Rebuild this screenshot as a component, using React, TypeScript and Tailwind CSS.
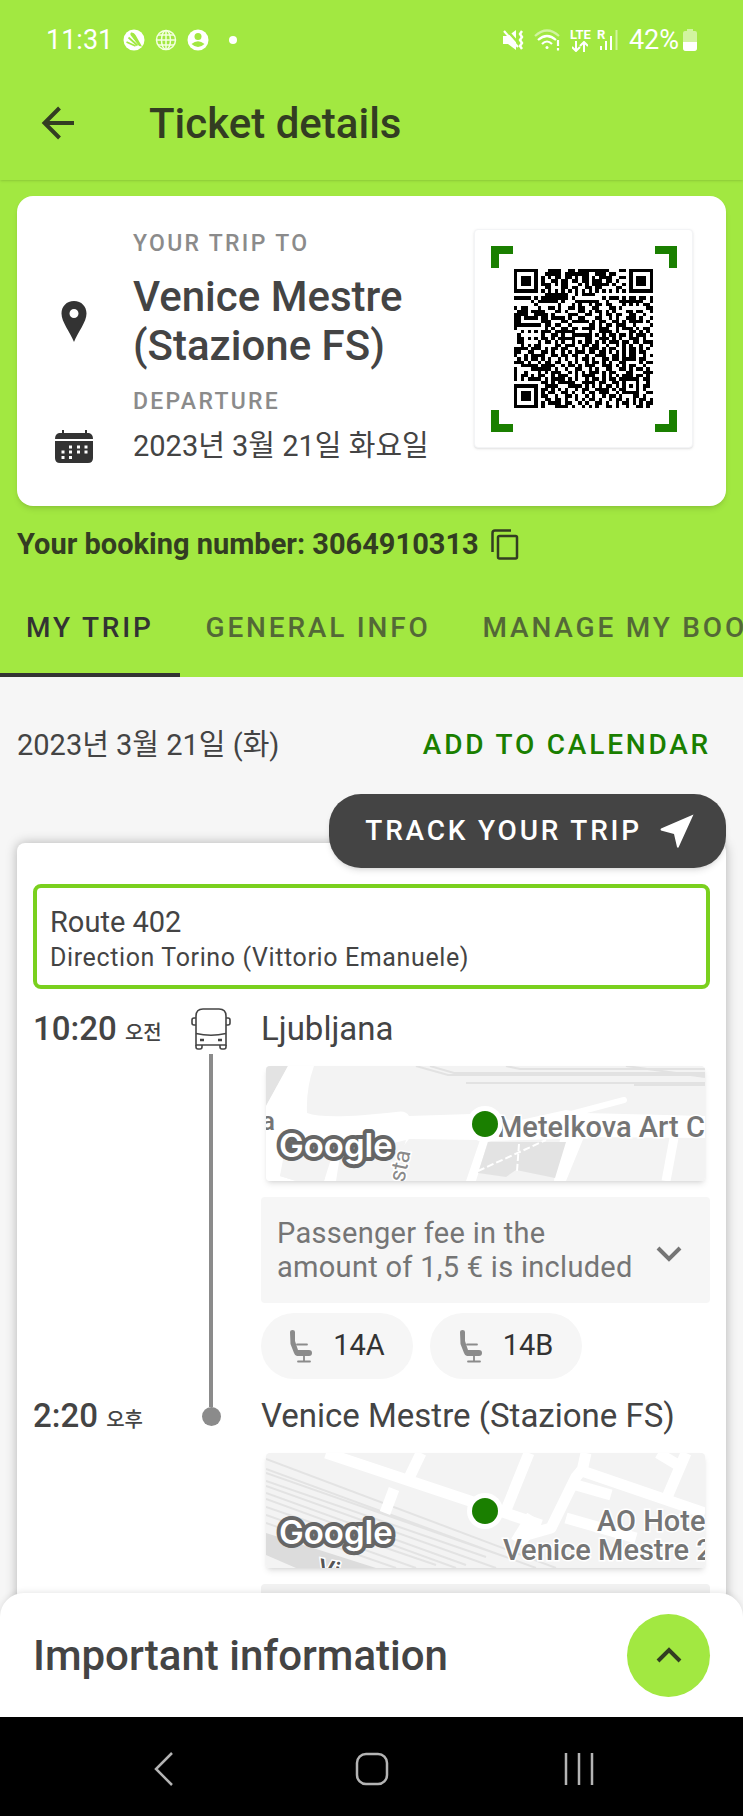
import React from "react";

const FONT = "font-[Roboto,'Noto_Sans_CJK_KR',sans-serif]";

// 예매 QR 코드 (41 x 41)
const QR_ROWS = [
  "#######...####..##.#########...##.#######",
  "#.....#..#####.#######..###.##....#.....#",
  "#.###.#.#.#.##.##.#.##.#.####..##.#.###.#",
  "#.###.#.#..##.##.##.##.###.##.#...#.###.#",
  "#.###.#.###.#.##...#.#.#####.#..#.#.###.#",
  "#.....#..##...##.##..##.##....##..#.....#",
  "#######.#.#.#.#.#.#.#.#.#.#.#.#.#.#######",
  ".........#######..#.####.................",
  "#####.#.########.#........#.###.#.##.##.#",
  ".....#.######.#...#######..#...#######..#",
  "......#......#...#.#..#.##.##...#.#.#.##.",
  "#.##...#..##.#..##.##..##...##.#.......##",
  ".###.####...##.#...##.#.##.#.#...##.##..#",
  "####..####.#....###..##..#.##.##..##..#..",
  "##.####.##.####.#..##...##..#.#..###.#..#",
  "##......###...##.#####.#.##..##.#.####.#.",
  "########.##.##..#.....##.#.##.###..#....#",
  "#........#.#..##.##.####.###..#.###.#.##.",
  "..#.#.#.###.######....#..####.#...##.#.#.",
  ".#......#..##.#..######.#.#.##.##.#.###.#",
  ".##.#.#.##.#.#####...##..###.#.#..###.#..",
  ".##....#.##.#.#..#.#.##.#.#.###.##.##.###",
  "..#.#.##....##.###..##.##..#..#.#.#..#..#",
  "####.###.#.##.##..#.#.###.#.##..#.##.#.#.",
  "##..##..##.#..#.#.###.##.##.#.#.#.##.##..",
  "#..#.####..##.##.##..#..###..##.#.##..#.#",
  ".#.#.##.#.#..#.#..#.##.#..##.##.####.##..",
  "###.#..#.##.##..#.#..#.##.#.#..##....#.##",
  "..#####.####..#.##.#.###..###.#.#.##..#..",
  "#....######.#..#..##..#.#..##..##.#.##.#.",
  "#..#...#.#.###..#.#.#.###.#.##...##...###",
  "#.##.#.##..#.###..#.####..#.#.#.###.##.#.",
  "#.#.####.#.####.#.#..#.##.#.##.######.##.",
  "........##.#.#####..####.##..##.#...#..#.",
  "#######..####...####.#.#.#.##.#.#.#.#.##.",
  "#.....#.##.#.#.#..#.##..####.#.##...#.#..",
  "#.###.#.#.##..##.#..#.##.###..#.#####..##",
  "#.###.#.##..#..##.#..#.#..#.##.#...##.#..",
  "#.###.#..##.##.#..#.#.##.#..#.##.#.#.##.#",
  "#.....#.#.####.##..#.#..##.#..#.##.#.#.##",
  "#######.#...####.#..#.#.#..##.#..#..##.#.",
];

const QrCode: React.FC = () => (
  <svg
    viewBox="0 0 41 41"
    className="w-[139px] h-[139px]"
    shapeRendering="crispEdges"
    role="img"
    aria-label="QR"
  >
    {QR_ROWS.map((row, y) =>
      row
        .split("")
        .map((cell, x) =>
          cell === "#" ? (
            <rect key={`${x}-${y}`} x={x} y={y} width="1" height="1" />
          ) : null
        )
    )}
  </svg>
);

const GoogleLogo: React.FC = () => (
  <text
    x="13"
    y="91"
    fontFamily="Inter, sans-serif"
    fontWeight="600"
    fontSize="33"
    fill="#fff"
    stroke="#666"
    strokeWidth="8"
    strokeLinejoin="round"
    paintOrder="stroke"
  >
    Google
  </text>
);

const MapMarker: React.FC = () => (
  <g>
    <circle cx="219" cy="58" r="18" fill="#fff" />
    <circle cx="219" cy="58" r="13" fill="#1a7f00" />
  </g>
);

const mapLabel = {
  fontFamily: "Roboto, sans-serif",
  fontWeight: 500,
  fontSize: 29,
  fill: "#757575",
  stroke: "#fff",
  strokeWidth: 3,
  paintOrder: "stroke",
};

const LjubljanaMap: React.FC = () => (
  <svg
    viewBox="0 0 439 115"
    preserveAspectRatio="xMidYMid slice"
    className="block w-full h-[115px] rounded bg-[#f3f3f3]"
  >
    <path d="M0 0H22L0 40Z" fill="#e3e3e3" />
    <path
      d="M22 0H48Q40 22 41 47Q60 54 130 46Q140 44 143 50L205 48L250 55L300 44L318 47L439 50V72L318 71L300 115H288L294 73L222 75L210 115H200L214 74L143 73L110 115H78L70 115H58L66 90L20 88L14 110L30 115H0V40Z"
      fill="#fff"
    />
    <path d="M18 88L66 82L58 115H30L14 110Z" fill="#f3f3f3" />
    <path d="M74 90L140 74L128 115H70Z" fill="#f3f3f3" />
    <path d="M290 52L358 34" stroke="#fff" strokeWidth="6" strokeLinecap="round" />
    <path d="M222 76H300L289 112L250 104L240 111L212 107Z" fill="#e3e3e3" />
    <path
      d="M212 105L280 74M253 78L251 105"
      stroke="#fff"
      strokeWidth="2"
      strokeDasharray="7 3"
      fill="none"
    />
    <path d="M408 72L400 115" stroke="#fff" strokeWidth="9" />
    <path
      d="M150 0L182 9H439M164 0L188 7H439M240 0L254 3H439M200 17H439M368 19H439M360 0L439 11"
      stroke="#e2e2e2"
      strokeWidth="2"
      fill="none"
    />
    <text x="-5" y="64" {...mapLabel} fontSize="26">
      a
    </text>
    <text
      x="0"
      y="0"
      {...mapLabel}
      fontWeight="400"
      fontSize="23"
      fill="#8a8a8a"
      transform="translate(138 117) rotate(-78)"
    >
      sta
    </text>
    <text x="231" y="71" {...mapLabel}>
      Metelkova Art Center
    </text>
    <GoogleLogo />
    <MapMarker />
  </svg>
);

const VeniceMap: React.FC = () => (
  <svg
    viewBox="0 0 439 115"
    preserveAspectRatio="xMidYMid slice"
    className="block w-full h-[115px] rounded bg-[#f3f3f3]"
  >
    <path d="M0 80L110 115H30L0 102Z" fill="#dcdcdc" />
    <path
      d="M0 6L290 115M0 16L270 115M0 20L240 104M0 28L220 104M0 33L230 115M0 40L200 112M0 46L190 115M0 54L170 112M0 62L150 115M0 70L130 115"
      stroke="#e3e3e3"
      strokeWidth="2"
      fill="none"
    />
    <path
      d="M60 0L210 50L275 72M155 0L143 25M128 36L119 60M263 0L238 62M250 85L285 75L310 24L320 12M320 0L316 18L439 60M420 0L402 42M392 0L412 12M300 65L370 85M310 32L345 42"
      stroke="#fff"
      strokeWidth="11"
      strokeLinejoin="round"
      fill="none"
    />
    <path d="M252 90L268 64" stroke="#fff" strokeWidth="16" />
    <text
      x="0"
      y="0"
      {...mapLabel}
      fontSize="24"
      fill="#555"
      transform="translate(51 122) rotate(12)"
    >
      Vi
    </text>
    <text x="331" y="78" {...mapLabel}>
      AO Hotel
    </text>
    <text x="237" y="107" {...mapLabel}>
      Venice Mestre 2
    </text>
    <GoogleLogo />
    <MapMarker />
  </svg>
);

const BusIcon: React.FC = () => (
  <svg
    viewBox="0 0 40 42"
    className="w-10 h-[42px]"
    fill="none"
    stroke="#444"
    strokeWidth="1.6"
  >
    <path d="M5 37V8Q5 1 12 1H28Q35 1 35 8V37Z" />
    <path d="M5 25.500Q20 29 35 25.500" />
    <path d="M5 10H3Q1 10 1 12V15Q1 17 3 17H5M35 10H37Q39 10 39 12V15Q39 17 37 17H35" />
    <path d="M5 37V39Q5 41 7 41H9Q11 41 11 39V37M29 37V39Q29 41 31 41H33Q35 41 35 39V37" />
    <path d="M9 32H13M27 32H31" strokeWidth="2.400" />
  </svg>
);

const SeatIcon: React.FC = () => (
  <svg viewBox="0 0 24 34" className="w-6 h-[34px]" fill="#8b8b8b">
    <path d="M1 3Q1 1 3.500 1T6 3V12L9 21H20Q23 21 23 24T20 27H8Q6 27 5 24L1.500 15Z" />
    <path
      d="M8 15.500H18M15 26V32M9 32.500H21"
      stroke="#8b8b8b"
      strokeWidth="1.800"
      strokeLinecap="round"
    />
  </svg>
);

const StatusBar: React.FC = () => (
  <div className="flex items-center justify-between pl-[46px] pr-[46px] pt-5 h-[60px] text-white text-[27px]">
    <div className="flex items-center">
      <span>11:31</span>
      <svg viewBox="0 0 22 22" className="ml-2.5 w-[22px] h-[22px]">
        <circle cx="11" cy="11" r="10.500" fill="#fff" />
        <path
          d="M8 3.500Q11 3 12.500 6L19 17.500L16 17L7.500 6Q7 4.500 8 3.500Z"
          fill="#a2e841"
        />
        <path
          d="M5.500 8.500L14.500 16.500M3.500 13L12.500 17"
          stroke="#a2e841"
          strokeWidth="1.800"
          fill="none"
        />
      </svg>
      <svg
        viewBox="0 0 22 22"
        className="ml-2.5 w-[22px] h-[22px]"
        fill="none"
        stroke="#f4ffe0"
        strokeWidth="1.500"
      >
        <circle cx="11" cy="11" r="9.500" />
        <ellipse cx="11" cy="11" rx="4.500" ry="9.500" />
        <path d="M11 1V21M1.500 11H20.500M3 6H19M3 16H19" />
      </svg>
      <svg viewBox="0 0 22 22" className="ml-2.5 w-[22px] h-[22px]">
        <circle cx="11" cy="11" r="10.500" fill="#fff" />
        <circle cx="11" cy="7.500" r="3.500" fill="#a2e841" />
        <path d="M4.500 15Q11 9.500 17.500 15Q11 21 4.500 15Z" fill="#a2e841" />
      </svg>
      <span className="ml-5 w-2 h-2 rounded-full bg-white" />
    </div>
    <div className="flex items-center">
      <svg viewBox="0 0 22 22" className="w-[22px] h-[22px]" fill="#fff">
        <path d="M1 7H6L14 1V21L6 15H1Z" />
        <path d="M3 -1L19 17" stroke="#a2e841" strokeWidth="2.500" />
        <path d="M2 2L16 18" stroke="#fff" strokeWidth="2.200" />
        <path
          d="M20 2L18 5L20 8L18 11L20 14L18 17L20 20"
          stroke="#fff"
          strokeWidth="2.400"
          fill="none"
        />
      </svg>
      <svg
        viewBox="0 0 26 22"
        className="ml-2.5 w-[26px] h-[22px]"
        fill="none"
        stroke="#fff"
        strokeWidth="2.200"
      >
        <path d="M1 7Q13 -4 25 7" opacity=".5" />
        <path d="M4 11Q13 3 22 11M8 15Q13 10 18 15" />
        <circle cx="13" cy="18.500" r="1.500" fill="#fff" stroke="none" />
        <path d="M24 11V17M24 19V21.500" />
      </svg>
      <div className="ml-2.5 flex flex-col items-center">
        <span className="text-[13px] leading-3 font-bold">LTE</span>
        <svg
          viewBox="0 0 16 11"
          className="w-4 h-[11px]"
          fill="none"
          stroke="#fff"
          strokeWidth="2"
        >
          <path d="M4 0V9M0 6L4 10L8 6M12 11V1M8 5L12 1L16 5" />
        </svg>
      </div>
      <svg viewBox="0 0 22 22" className="ml-1.5 w-[22px] h-[22px]" fill="#fff">
        <text x="0" y="10" fontSize="13" fontWeight="700" fontFamily="Roboto, sans-serif">
          R
        </text>
        <path d="M3 17H5V21H3ZM8 12H10V21H8ZM13 7H15V21H13Z" />
        <path d="M18.500 1H20.500V21H18.500Z" opacity=".5" />
      </svg>
      <span className="ml-2.5">42%</span>
      <svg viewBox="0 0 14 22" className="ml-1 w-3.5 h-[22px]" fill="#fff">
        <path
          d="M4 0H10V2H12Q14 2 14 4V19Q14 22 11 22H3Q0 22 0 19V4Q0 2 2 2H4Z"
          opacity=".5"
        />
        <path d="M0 13H14V19Q14 22 11 22H3Q0 22 0 19Z" />
      </svg>
    </div>
  </div>
);

const SeatChip: React.FC<{ seat: string }> = ({ seat }) => (
  <span className="flex items-center justify-center gap-5 w-[152px] h-[66px] rounded-full bg-[#f6f6f6] text-[29px] text-[#333]">
    <SeatIcon />
    {seat}
  </span>
);

const TripHeader: React.FC = () => (
  <section className="px-[17px] pt-4">
    <div className="flex justify-between h-[310px] rounded-2xl bg-white shadow-md pl-[38px] pr-[33px]">
      <div className="pt-8">
        <p className="pl-[78px] text-[23px] leading-8 tracking-widest font-medium text-[#8b8b8b]">
          YOUR TRIP TO
        </p>
        <div className="mt-3 flex items-center gap-10">
          <svg viewBox="0 0 26 41" className="mx-[6px] w-[26px] h-[41px]">
            <path
              d="M13 0C5.500 0 .5 5.500 .5 12.500C.5 21 9 31 13 41C17 31 25.500 21 25.500 12.500C25.500 5.500 20.500 0 13 0ZM13 8A4.500 4.500 0 1 1 13 17A4.500 4.500 0 1 1 13 8Z"
              fill="#333"
            />
          </svg>
          <h2 className="text-[42px] leading-[49px] font-medium text-[#444]">
            Venice Mestre
            <br />
            (Stazione FS)
          </h2>
        </div>
        <p className="mt-4 pl-[78px] text-[23px] leading-8 tracking-widest font-medium text-[#8b8b8b]">
          DEPARTURE
        </p>
        <div className="flex items-center gap-10 mt-2">
          <svg viewBox="0 0 38 33" className="w-[38px] h-[33px]" fill="#333">
            <path d="M7 0H9V3H30V0H32V3H34Q38 4 38 9H0Q0 4 4 3H7Z" />
            <path d="M0 11H38V28Q38 33 33 33H5Q0 33 0 28Z" />
            <path
              d="M14 15.500h3v3h-3zM22 15.500h3v3h-3zM29.500 15.500h3v3h-3zM6.500 20.500h3v3h-3zM14 20.500h3v3h-3zM22 20.500h3v3h-3zM29.500 20.500h3v3h-3zM6.500 26h3v3h-3zM14 26h3v3h-3z"
              fill="#fff"
            />
          </svg>
          <p className="text-[29px] leading-10 text-[#444]">2023년 3월 21일 화요일</p>
        </div>
      </div>
      <div className="mt-[33px] w-[219px] h-[219px] flex items-center justify-center rounded bg-white border border-gray-100 shadow">
        <div className="relative flex items-center justify-center w-[186px] h-[186px]">
          <span className="absolute top-0 left-0 w-[22px] h-[22px] border-t-8 border-l-8 border-[#1a7f00]" />
          <span className="absolute top-0 right-0 w-[22px] h-[22px] border-t-8 border-r-8 border-[#1a7f00]" />
          <span className="absolute bottom-0 left-0 w-[22px] h-[22px] border-b-8 border-l-8 border-[#1a7f00]" />
          <span className="absolute bottom-0 right-0 w-[22px] h-[22px] border-b-8 border-r-8 border-[#1a7f00]" />
          <QrCode />
        </div>
      </div>
    </div>
    <div className="flex items-center gap-3 mt-[18px] text-[29px] leading-10 font-bold text-[#333d22]">
      <p>Your booking number: 3064910313</p>
      <button aria-label="Copy">
        <svg
          viewBox="0 0 28 31"
          className="w-7 h-[31px]"
          fill="none"
          stroke="currentColor"
          strokeWidth="2.500"
        >
          <path d="M1.500 23V4Q1.500 1.500 4 1.500H20" />
          <rect x="7" y="7" width="19" height="22.500" rx="1.500" />
        </svg>
      </button>
    </div>
  </section>
);

const Tabs: React.FC = () => (
  <nav className="mt-[30px] flex h-[83px] overflow-hidden whitespace-nowrap text-[28px] font-medium tracking-widest text-[#333]">
    <button className="shrink-0 h-full px-[26px] pb-3 border-b-4 border-[#333]">MY TRIP</button>
    <button className="shrink-0 h-full px-[26px] pb-3 border-b-4 border-transparent opacity-70">
      GENERAL INFO
    </button>
    <button className="shrink-0 h-full px-[26px] pb-3 border-b-4 border-transparent opacity-70">
      MANAGE MY BOOKING
    </button>
  </nav>
);

const Itinerary: React.FC = () => (
  <section className="relative mt-[78px] mx-[17px] px-4 pt-[41px] h-[1000px] bg-white rounded-t-lg shadow-[0_0_12px_rgba(0,0,0,0.28)] text-[#444]">
    <button className="absolute right-0 -top-[49px] h-[74px] flex items-center gap-[18px] pl-9 pr-8 rounded-[32px] bg-[#444] text-white text-[28px] font-medium tracking-widest shadow-md">
      TRACK YOUR TRIP
      <svg viewBox="0 0 34 34" className="w-[34px] h-[34px]" fill="#fff">
        <path d="M33.500 .5L18.500 33.500Q17.500 34 17 33L14 20L1 16.500Q0 15.500 1 14.500Z" />
      </svg>
    </button>

    <div className="h-[105px] px-[13px] pt-4 border-4 border-[#7ad01e] rounded-lg">
      <p className="text-[29px] leading-9">Route 402</p>
      <p className="text-[25px] leading-9 tracking-wide">
        Direction Torino (Vittorio Emanuele)
      </p>
    </div>

    <div className="flex pt-[19px]">
      <p className="w-36 text-[33px] leading-[42px] font-medium">
        10:20 <span className="text-[20px]">오전</span>
      </p>
      <div className="w-[68px] flex flex-col items-center">
        <BusIcon />
        <span className="mt-1 flex-1 w-1 bg-[#8b8b8b]" />
      </div>
      <div className="ml-4 flex-1">
        <h3 className="text-[33px] leading-[42px]">Ljubljana</h3>
        <div className="mt-4 mx-[5px] rounded shadow-md">
          <LjubljanaMap />
        </div>
        <button className="mt-4 w-full h-[106px] flex items-center justify-between pl-4 pr-7 rounded bg-[#f6f6f6] text-left text-[29px] leading-[34px] tracking-[0.01em] text-[#757575]">
          <span>
            Passenger fee in the
            <br />
            amount of 1,5 € is included
          </span>
          <svg
            viewBox="0 0 26 16"
            className="mt-2 w-[26px] h-4"
            fill="none"
            stroke="#757575"
            strokeWidth="4"
          >
            <path d="M2 2L13 13L24 2" />
          </svg>
        </button>
        <div className="flex gap-[17px] mt-[10px] pb-4">
          <SeatChip seat="14A" />
          <SeatChip seat="14B" />
        </div>
      </div>
    </div>

    <div className="flex">
      <p className="w-36 text-[33px] leading-[42px] font-medium">
        2:20 <span className="text-[20px]">오후</span>
      </p>
      <div className="w-[68px] flex flex-col items-center">
        <span className="w-1 h-3 bg-[#8b8b8b]" />
        <span className="w-[19px] h-[19px] rounded-full bg-[#8b8b8b]" />
      </div>
      <div className="ml-4 flex-1">
        <h3 className="text-[33px] leading-[42px] whitespace-nowrap">
          Venice Mestre (Stazione FS)
        </h3>
        <div className="mt-4 mx-[5px] rounded shadow-md">
          <VeniceMap />
        </div>
        <div className="mt-4 h-[106px] rounded bg-[#f1f1f1]" />
      </div>
    </div>
  </section>
);

const App: React.FC = () => {
  return (
    <div className={`h-screen flex flex-col overflow-hidden bg-[#f6f6f6] ${FONT}`}>
      <div className="shrink-0 bg-[#a2e841]">
        <header className="h-[180px] shadow-sm">
          <StatusBar />
          <div className="flex items-center h-[126px] pl-[41px] gap-[74px] text-[#333d22]">
            <button aria-label="Back">
              <svg
                viewBox="0 0 34 34"
                className="w-[34px] h-[34px]"
                fill="none"
                stroke="currentColor"
                strokeWidth="4"
              >
                <path d="M18.500 2L3.500 17L18.500 32M3 17H33" />
              </svg>
            </button>
            <h1 className="text-[42px] font-medium">Ticket details</h1>
          </div>
        </header>
        <TripHeader />
        <Tabs />
      </div>

      {/* 여행 일정 */}
      <main className="flex-1 min-h-0 overflow-hidden">
        <div className="flex items-center justify-between pl-[17px] pr-8 pt-12">
          <p className="text-[29px] leading-10 text-[#444]">2023년 3월 21일 (화)</p>
          <button className="text-[28px] leading-10 font-medium tracking-widest text-[#1a7f00]">
            ADD TO CALENDAR
          </button>
        </div>
        <Itinerary />
      </main>

      {/* 하단 시트 */}
      <section className="relative shrink-0 -mt-5 h-[124px] flex items-center justify-between px-[33px] rounded-t-3xl bg-white shadow-[0_-1px_6px_rgba(0,0,0,0.1)]">
        <h2 className="text-[42px] font-medium text-[#444]">Important information</h2>
        <button
          aria-label="Open"
          className="w-[83px] h-[83px] flex items-center justify-center rounded-full bg-[#a2e841]"
        >
          <svg
            viewBox="0 0 26 16"
            className="w-[26px] h-4"
            fill="none"
            stroke="#333d22"
            strokeWidth="4"
          >
            <path d="M2 14L13 3L24 14" />
          </svg>
        </button>
      </section>

      <nav className="shrink-0 h-[99px] flex items-center justify-around px-[61px] pt-1 bg-black text-[#b4b4b4]">
        <button aria-label="Previous">
          <svg
            viewBox="0 0 34 34"
            className="w-[34px] h-[34px]"
            fill="none"
            stroke="currentColor"
            strokeWidth="2.500"
          >
            <path d="M24 1L8 17L24 33" />
          </svg>
        </button>
        <button aria-label="Home">
          <svg
            viewBox="0 0 34 34"
            className="w-[34px] h-[34px]"
            fill="none"
            stroke="currentColor"
            strokeWidth="2.500"
          >
            <rect x="2" y="2" width="30" height="30" rx="9" />
          </svg>
        </button>
        <button aria-label="Recent">
          <svg
            viewBox="0 0 34 34"
            className="w-[34px] h-[34px]"
            fill="none"
            stroke="currentColor"
            strokeWidth="2.500"
          >
            <path d="M4 1V33M17 1V33M30 1V33" />
          </svg>
        </button>
      </nav>
    </div>
  );
};

export default App;
